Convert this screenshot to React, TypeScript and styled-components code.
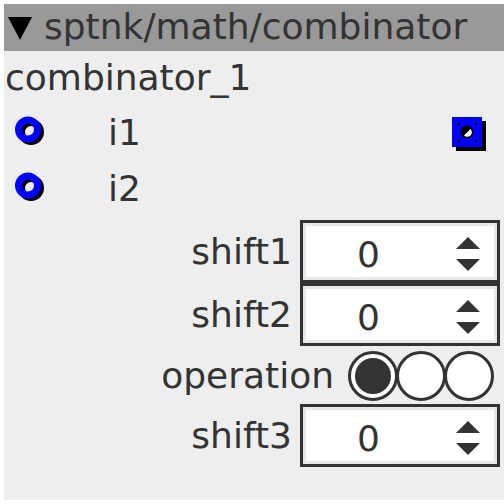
import React from 'react';
import styled, { createGlobalStyle } from 'styled-components';

const GlobalStyle = createGlobalStyle`
  html, body {
    margin: 0;
    padding: 0;
    background: #ffffff;
  }
  body {
    font-family: 'DejaVu Sans', 'Liberation Sans', sans-serif;
    color: #333333;
  }
`;

const Panel = styled.div`
  box-sizing: border-box;
  margin: 4px 0 0 4px;
  width: 500px;
  height: 496px;
  padding-right: 4px;
  background: #eeeeee;
  display: flex;
  flex-direction: column;
  font-size: 36px;
  overflow: hidden;
`;

const Header = styled.div`
  height: 47px;
  margin-right: -4px;
  background: #999999;
  display: flex;
  align-items: center;
  gap: 11px;
  padding-left: 3px;
  white-space: nowrap;
`;

const Title = styled.span`
  line-height: 1;
  margin-top: -2px;
`;

const NodeName = styled.div`
  height: 53px;
  display: flex;
  align-items: center;
  padding-left: 1px;
`;

const PortRow = styled.div`
  height: 56px;
  display: flex;
  align-items: center;
  padding-left: 9px;
  padding-right: 13px;
`;

const PortLabel = styled.span`
  margin-left: 59px;
  flex: 1;
`;

const ParamRow = styled.div<{ $height: number; $gap: number; $right: number; $top?: number }>`
  height: ${p => p.$height}px;
  margin-top: ${p => p.$top ?? 0}px;
  display: flex;
  align-items: center;
  justify-content: flex-end;
  gap: ${p => p.$gap}px;
  padding-right: ${p => p.$right}px;
`;

const ParamLabel = styled.span`
  white-space: nowrap;
`;

const SpinBox = styled.div`
  box-sizing: border-box;
  width: 200px;
  height: 100%;
  border: 3px solid #333333;
  background: #ffffff;
  box-shadow: inset 0 0 0 3px #e8e8e8;
  display: flex;
  align-items: center;
`;

const SpinValue = styled.span`
  flex: 1;
  padding-left: 54px;
  padding-top: 6px;
`;

const SpinArrows = styled.div`
  width: 54px;
  display: flex;
  justify-content: center;
  padding-right: 2px;
  padding-top: 4px;
`;

const RadioGroup = styled.div`
  display: flex;
`;

const Radio = styled.div<{ $checked?: boolean }>`
  box-sizing: border-box;
  width: 50px;
  height: 50px;
  border-radius: 50%;
  border: 3px solid #333333;
  background: #ffffff;
  margin-left: -2px;
  display: flex;
  align-items: center;
  justify-content: center;

  &::after {
    content: '';
    display: ${p => (p.$checked ? 'block' : 'none')};
    width: 36px;
    height: 36px;
    border-radius: 50%;
    background: #333333;
  }
`;

const Triangle = () => (
  <svg width="26" height="26" viewBox="0 0 26 26">
    <polygon points="1,2 25,2 13,25" fill="#000" />
  </svg>
);

const InPort = () => (
  <svg width="36" height="36" viewBox="0 0 36 36">
    <circle cx="18" cy="18" r="9.5" fill="none" stroke="#000" strokeWidth="7" />
    <circle cx="15" cy="15.5" r="9.5" fill="none" stroke="#0000ff" strokeWidth="7" />
  </svg>
);

const OutPort = () => (
  <svg width="36" height="36" viewBox="0 0 36 36" style={{ marginTop: 4 }}>
    <rect x="5" y="5" width="30" height="30" fill="#000" />
    <rect x="1" y="1" width="30" height="30" fill="#0000ff" />
    <circle cx="16" cy="16" r="6.5" fill="#000" />
    <path d="M19.5 13 A4.5 4.5 0 0 1 13 19.5 Z" fill="#fff" />
    <rect x="7" y="7" width="2" height="2" fill="#000" />
    <rect x="24" y="7" width="2" height="2" fill="#000" />
    <rect x="7" y="24" width="2" height="2" fill="#000" />
    <rect x="24" y="24" width="2" height="2" fill="#000" />
  </svg>
);

const Arrows = () => (
  <svg width="26" height="36" viewBox="0 0 26 36">
    <polygon points="13,1 25,13 1,13" fill="#333" />
    <polygon points="1,23 25,23 13,35" fill="#333" />
  </svg>
);

const Spin = ({ label, top }: { label: string; top?: number }) => (
  <ParamRow $height={63} $gap={8} $right={0} $top={top}>
    <ParamLabel>{label}</ParamLabel>
    <SpinBox>
      <SpinValue>0</SpinValue>
      <SpinArrows>
        <Arrows />
      </SpinArrows>
    </SpinBox>
  </ParamRow>
);

export default function App() {
  return (
    <>
      <GlobalStyle />
      <Panel>
        <Header>
          <Triangle />
          <Title>sptnk/math/combinator</Title>
        </Header>
        <NodeName>combinator_1</NodeName>
        <PortRow>
          <InPort />
          <PortLabel>i1</PortLabel>
          <OutPort />
        </PortRow>
        <PortRow>
          <InPort />
          <PortLabel>i2</PortLabel>
        </PortRow>
        <Spin label="shift1" top={4} />
        <Spin label="shift2" />
        <ParamRow $height={57} $gap={16} $right={6} $top={1}>
          <ParamLabel>operation</ParamLabel>
          <RadioGroup>
            <Radio $checked />
            <Radio />
            <Radio />
          </RadioGroup>
        </ParamRow>
        <Spin label="shift3" />
      </Panel>
    </>
  );
}
